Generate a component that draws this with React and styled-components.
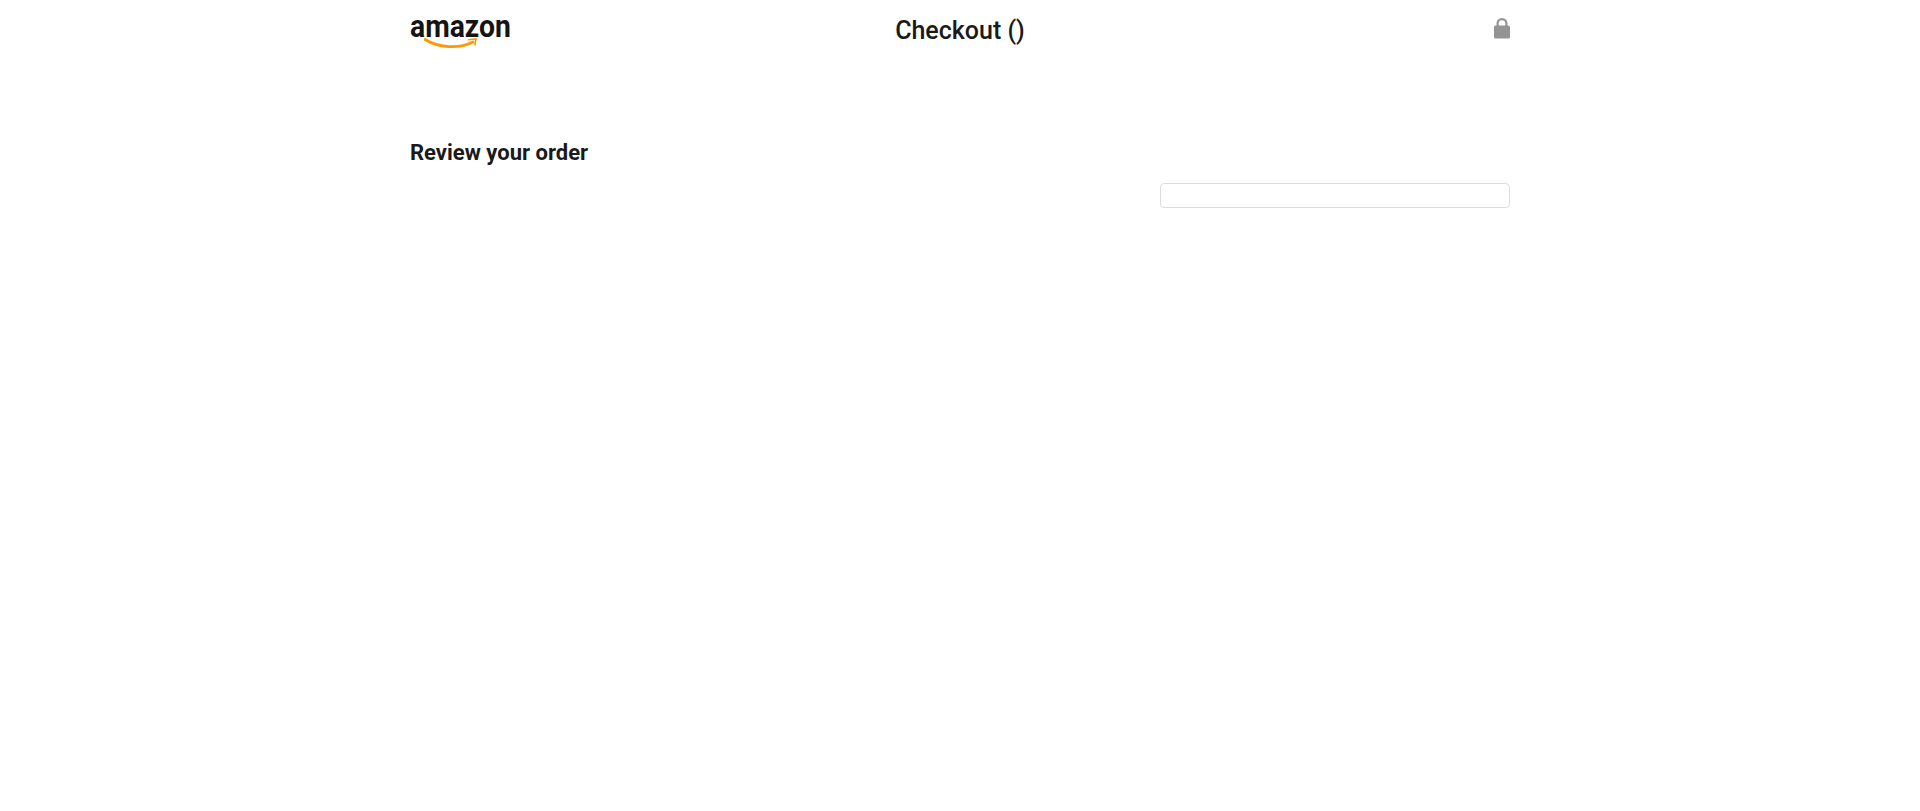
import React from 'react'
import styled, { createGlobalStyle } from 'styled-components';

const GlobalStyle = createGlobalStyle`
    body{
        margin:0;
        background-color:#fff;
        color:#1a1a1a;
        font-family:Roboto, "Liberation Sans", sans-serif;
    }
`;

const Page = styled.div`
    width:1100px;
    margin:0 auto;
`;

const Header = styled.header`
    display:grid;
    grid-template-columns:1fr auto 1fr;
    align-items:start;
    height:60px;
`;

const Logo = styled.div`
    display:flex;
    flex-direction:column;
    align-items:flex-start;
    padding-top:13px;
    span{
        font-family:Roboto, sans-serif;
        font-weight:700;
        font-size:32px;
        line-height:26px;
        color:#141414;
        transform:scaleX(.885);
        transform-origin:left center;
    }
    svg{
        display:block;
        margin:-1px 0 0 14px;
    }
`;

const Title = styled.h1`
    margin:0;
    padding-top:16px;
    font-size:25px;
    line-height:30px;
    font-weight:500;
`;

const Lock = styled.div`
    justify-self:end;
    padding:17px 0 0 0;
    svg{
        display:block;
    }
`;

const Content = styled.main`
    padding-top:80px;
`;

const Heading = styled.h2`
    margin:0;
    font-size:22px;
    line-height:26px;
    font-weight:700;
`;

const Columns = styled.div`
    display:flex;
    justify-content:flex-end;
    padding-top:17px;
`;

const SummaryBox = styled.div`
    box-sizing:border-box;
    width:350px;
    height:25px;
    border:1px solid #ddd;
    border-radius:4px;
`;

const App = () => {
  return (
    <>
        <GlobalStyle />
        <Page>
            <Header>
                <Logo>
                    <span>amazon</span>
                    <svg width="58" height="12" viewBox="0 0 58 12" fill="none">
                        <path d="M1 1.5C14 9.5 34 11.5 49 4" stroke="#f90" strokeWidth="2.8" strokeLinecap="round" />
                        <path d="M44 1.8L52 1L50.8 7.5" stroke="#f90" strokeWidth="1.6" fill="none" />
                    </svg>
                </Logo>
                <Title>Checkout ()</Title>
                <Lock>
                    <svg width="16" height="22" viewBox="0 0 16 22">
                        <path d="M3.6 10V6.5a4.4 4.4 0 0 1 8.8 0V10" fill="none" stroke="#949494" strokeWidth="2.2" />
                        <rect x="0" y="8.5" width="16" height="13" rx="1.5" fill="#949494" />
                    </svg>
                </Lock>
            </Header>
            <Content>
                <Heading>Review your order</Heading>
                <Columns>
                    <SummaryBox />
                </Columns>
            </Content>
        </Page>
    </>
  )
}

export default App
